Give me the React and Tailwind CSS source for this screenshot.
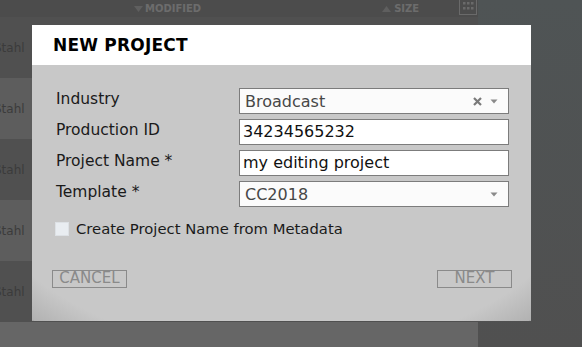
import React from "react";

const font = { fontFamily: '"DejaVu Sans", sans-serif' };

function Row({ light, h = "h-[61px]" }) {
  return (
    <div className={`${h} flex items-center ${light ? "bg-[#5d5d5d]" : "bg-[#505050]"}`}>
      <span className="ml-[-6px] text-[12px] text-[#3b3b3b] leading-none">Stahl</span>
    </div>
  );
}

function Caret() {
  return (
    <svg width="8" height="5" viewBox="0 0 8 5" className="shrink-0">
      <polygon points="0.5,0.5 7.5,0.5 4,4.5" fill="#8a8a8a" />
    </svg>
  );
}

function Clear() {
  return (
    <svg width="9" height="9" viewBox="0 0 9 9" className="shrink-0">
      <path d="M1 1 L8 8 M8 1 L1 8" stroke="#7a7a7a" strokeWidth="2.2" strokeLinecap="butt" />
    </svg>
  );
}

export default function App() {
  return (
    <div className="relative w-[582px] h-[347px] overflow-hidden flex bg-[#505354]" style={font}>
      {/* background file list */}
      <div className="w-[478px] flex flex-col">
        <div className="h-[17px] bg-[#4c4c4c] relative flex items-center text-[10px] font-bold text-[#6c6c6c] leading-none">
          <div className="ml-[134px] flex items-center gap-[2px]">
            <svg width="9" height="6" viewBox="0 0 9 6">
              <polygon points="0,0 9,0 4.5,6" fill="#5f5f5f" />
            </svg>
            <span>MODIFIED</span>
          </div>
          <div className="ml-[181px] flex items-center gap-[3px]">
            <svg width="9" height="6" viewBox="0 0 9 6">
              <polygon points="0,6 9,6 4.5,0" fill="#5f5f5f" />
            </svg>
            <span>SIZE</span>
          </div>
          <svg width="18" height="16" viewBox="0 0 18 16" className="ml-[40px] mt-[-3px]">
            <rect x="0.5" y="-2" width="17" height="17.5" fill="none" stroke="#6a6a6a" />
            <rect x="4" y="3" width="2.5" height="2.5" fill="#6a6a6a" />
            <rect x="8" y="3" width="2.5" height="2.5" fill="#6a6a6a" />
            <rect x="12" y="3" width="2.5" height="2.5" fill="#6a6a6a" />
            <rect x="4" y="8" width="2.5" height="2.5" fill="#6a6a6a" />
            <rect x="8" y="8" width="2.5" height="2.5" fill="#6a6a6a" />
            <rect x="12" y="8" width="2.5" height="2.5" fill="#6a6a6a" />
          </svg>
        </div>
        <Row />
        <Row light />
        <Row />
        <Row light />
        <Row />
        <div className="flex-1 bg-[#666666]" />
      </div>
      <div className="flex-1 bg-[linear-gradient(180deg,#4f5455,#505050)]" />

      {/* modal */}
      <div className="absolute left-[32px] top-[25px] w-[499px] h-[296px] flex flex-col">
        <div className="h-[40px] bg-white flex items-center pl-[21px] pt-[1px]">
          <span className="text-[17px] font-bold text-black leading-none tracking-[0.2px]">NEW PROJECT</span>
        </div>
        <div className="flex-1 flex flex-col pt-[23px] bg-[radial-gradient(ellipse_345px_236px_at_50%_65px,#c8c8c8_95%,#b2b2b2_108%,#a8a8a8)]">
          <div className="grid grid-cols-[183px_270px] gap-y-[5px] pl-[24px]">
            <div className="h-[26px] flex items-center text-[15.5px] text-[#1a1a1a] pb-[3px]">Industry</div>
            <div className="h-[26px] bg-[#fbfbfb] border border-[#7c7c7c] flex items-center pl-[5px] pr-[10px] text-[16px] text-[#474747]">
              <span className="flex-1 pt-[1px]">Broadcast</span>
              <Clear />
              <span className="w-[8px]" />
              <Caret />
            </div>

            <div className="h-[26px] flex items-center text-[15.5px] text-[#1a1a1a] pb-[2px]">Production ID</div>
            <div className="h-[26px] bg-white border border-[#7c7c7c] flex items-center pl-[3px] text-[16px] text-[#111]">
              34234565232
            </div>

            <div className="h-[26px] flex items-center text-[15.5px] text-[#1a1a1a] pb-[2px]">Project Name *</div>
            <div className="h-[26px] bg-white border border-[#7c7c7c] flex items-center pl-[3px] text-[16px] text-[#111]">
              my editing project
            </div>

            <div className="h-[26px] flex items-center text-[15.5px] text-[#1a1a1a] pb-[2px]">Template *</div>
            <div className="h-[26px] bg-[#fbfbfb] border border-[#7c7c7c] flex items-center pl-[5px] pr-[10px] text-[16px] text-[#474747]">
              <span className="flex-1 pt-[1px]">CC2018</span>
              <Caret />
            </div>
          </div>

          <div className="flex items-center mt-[15px] pl-[23px] gap-[7px]">
            <div className="w-[14px] h-[14px] bg-[#e9edf1] border border-[#dde1e5]" />
            <span className="text-[14.8px] text-[#1a1a1a] leading-none">Create Project Name from Metadata</span>
          </div>

          <div className="flex justify-between mt-[33px] pl-[20px] pr-[19px]">
            <button className="w-[75px] h-[18px] border border-[#8a8a8a] text-[15px] text-[#8a8a8a] leading-none flex items-center justify-center">CANCEL</button>
            <button className="w-[75px] h-[18px] border border-[#8a8a8a] text-[15px] text-[#8a8a8a] leading-none flex items-center justify-center">NEXT</button>
          </div>
        </div>
      </div>
    </div>
  );
}
